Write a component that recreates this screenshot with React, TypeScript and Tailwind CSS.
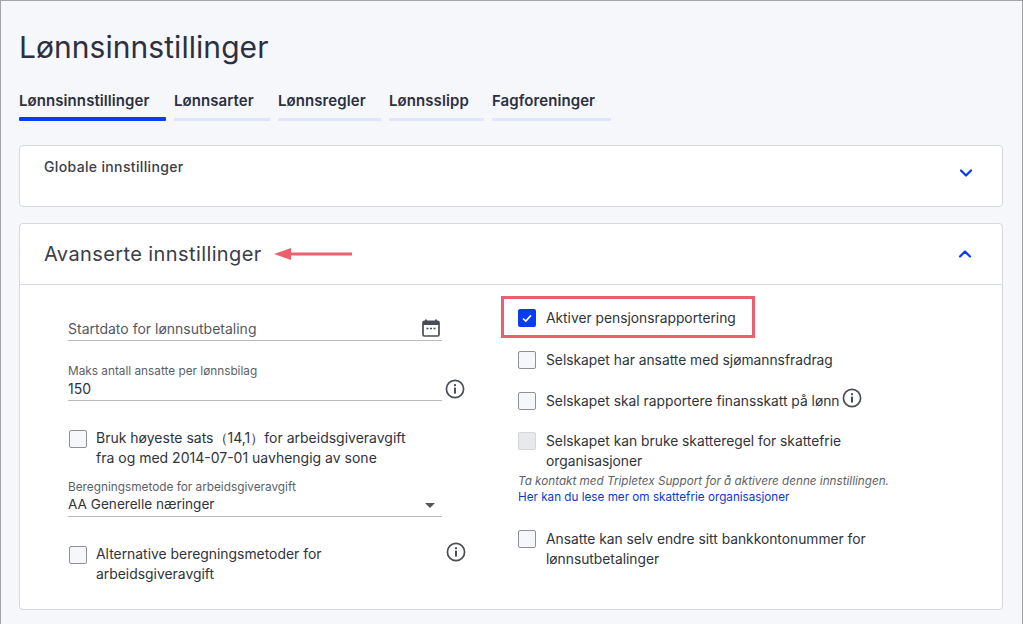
import { ChevronDown, ChevronUp } from 'lucide-react';

const tabs = [
  { label: 'Lønnsinnstillinger', width: 'w-[147px]', active: true },
  { label: 'Lønnsarter', width: 'w-[96px]', active: false },
  { label: 'Lønnsregler', width: 'w-[103px]', active: false },
  { label: 'Lønnsslipp', width: 'w-[95px]', active: false },
  { label: 'Fagforeninger', width: 'w-[119px]', active: false },
];

function InfoIcon({ className }: { className?: string }) {
  return (
    <svg viewBox="0 0 20 20" className={className} fill="none">
      <circle cx="10" cy="10" r="8.6" stroke="#4a4d55" strokeWidth="1.7" />
      <circle cx="10" cy="6.2" r="1.15" fill="#4a4d55" />
      <rect x="9" y="8.6" width="2" height="6" fill="#4a4d55" />
    </svg>
  );
}

function CalendarIcon() {
  return (
    <svg viewBox="0 0 18 18" className="w-[18px] h-[18px]" fill="none">
      <path d="M4 0.5v2.5M14 0.5v2.5" stroke="#4a4d55" strokeWidth="1.8" />
      <rect x="1" y="2.4" width="16" height="14.6" rx="1.4" stroke="#4a4d55" strokeWidth="1.7" />
      <rect x="1" y="2.4" width="16" height="3.6" fill="#4a4d55" />
      <path d="M4.5 9.4h2M8 9.4h2M11.5 9.4h2" stroke="#4a4d55" strokeWidth="1.5" />
    </svg>
  );
}

function Box({ checked, disabled }: { checked?: boolean; disabled?: boolean }) {
  if (checked) {
    return (
      <div className="w-[18px] h-[18px] shrink-0 rounded-[2px] bg-[#0a3cf5] flex items-center justify-center">
        <svg viewBox="0 0 12 12" className="w-[12px] h-[12px]" fill="none">
          <path d="M2 6.5l2.8 2.6L10 3.4" stroke="white" strokeWidth="1.7" />
        </svg>
      </div>
    );
  }
  return (
    <div
      className={
        disabled
          ? 'w-[18px] h-[18px] shrink-0 rounded-[2px] border border-[#d5d6da] bg-[#e8e9ed]'
          : 'w-[18px] h-[18px] shrink-0 rounded-[2px] border border-[#8f9197] bg-[#f6f7fb]'
      }
    />
  );
}

export default function App() {
  return (
    <div className="w-[1023px] h-[624px] overflow-hidden bg-[#f6f7fb] border-t border-x border-[#a3a4a8] px-[18px] text-[#30333b] font-['Inter','Liberation_Sans',sans-serif] text-[14px]">
      <h1 className="mt-[27px] h-[38px] leading-[38px] text-[30px] font-normal text-[#2c3040] tracking-[0.05px]">
        Lønnsinnstillinger
      </h1>

      {/* Tabs */}
      <div className="mt-[24px] flex gap-2">
        {tabs.map((tab) => (
          <div key={tab.label} className={tab.width}>
            <div className="h-[27px] leading-[22px] text-[15px] tracking-[0.08px] font-semibold text-[#2c3040] whitespace-nowrap">
              {tab.label}
            </div>
            <div className={tab.active ? 'h-[4px] rounded-[1px] bg-[#0a3cf5]' : 'mt-[1px] h-[3px] bg-[#dfe6fb]'} />
          </div>
        ))}
      </div>

      {/* Globale innstillinger */}
      <div className="mt-[24px] w-[984px] h-[62px] bg-white border border-[#d8d9dd] rounded-[4px] pl-[24px] pr-[26px] flex justify-between">
        <div className="mt-[12px] text-[14px] tracking-[0.35px] leading-[18px] font-medium text-[#3a3d4a]">Globale innstillinger</div>
        <ChevronDown className="mt-[17px] w-[20px] h-[20px] text-[#0a3cf5]" strokeWidth={2.7} />
      </div>

      {/* Avanserte innstillinger */}
      <div className="mt-[16px] w-[984px] h-[387px] bg-white border border-[#d8d9dd] rounded-[4px]">
        <div className="h-[61px] border-b border-[#d8d9dd] pl-[24px] pr-[27px] flex items-center justify-between">
          <div className="flex items-center gap-[12px]">
            <span className="text-[20px] leading-[24px] text-[#3a3d4a] tracking-[0.4px]">Avanserte innstillinger</span>
            <svg viewBox="0 0 78 12" className="w-[78px] h-[12px]">
              <path d="M0 6L17 0v4.5h61v3H17V12z" fill="#ec5f6c" />
            </svg>
          </div>
          <ChevronUp className="w-[20px] h-[20px] text-[#0a3cf5]" strokeWidth={2.7} />
        </div>

        <div className="flex">
          {/* Left column */}
          <div className="w-[482px] pl-[48px] shrink-0">
            <div className="mt-[25px] w-[374px] h-[31px] border-b border-[#b9babd] flex justify-between pr-[2px] text-[#55585f]">
              <span className="mt-[9px] leading-[20px]">Startdato for lønnsutbetaling</span>
              <span className="mt-[9px]"><CalendarIcon /></span>
            </div>

            <div className="mt-[22px] flex gap-[3px]">
              <div className="w-[374px] h-[38px] border-b border-[#b9babd]">
                <div className="text-[11.8px] leading-[16px] text-[#5c5f66]">Maks antall ansatte per lønnsbilag</div>
                <div className="leading-[20px] text-[#30333b]">150</div>
              </div>
              <InfoIcon className="mt-[16px] w-[20px] h-[20px]" />
            </div>

            <div className="mt-[27px] ml-[1px] flex gap-[9px]">
              <div className="mt-[2px]"><Box /></div>
              <div className="leading-[20px] w-[340px]">
                Bruk høyeste sats（14,1）for arbeidsgiveravgift
                <br />
                fra og med 2014-07-01 uavhengig av sone
              </div>
            </div>

            <div className="mt-[11px] w-[374px] h-[38px] border-b border-[#b9babd] relative">
              <div className="text-[11.8px] leading-[16px] text-[#5c5f66]">Beregningsmetode for arbeidsgiveravgift</div>
              <div className="text-[13.6px] leading-[20px] mt-[-1px]">AA Generelle næringer</div>
              <div className="absolute right-[7px] top-[24px] w-0 h-0 border-x-[5px] border-x-transparent border-t-[5px] border-t-[#55585f]" />
            </div>

            <div className="mt-[27px] flex">
              <div className="ml-[1px] mr-[9px] mt-[2px]"><Box /></div>
              <div className="leading-[20px] w-[340px] text-[13.9px]">
                Alternative beregningsmetoder for
                <br />
                arbeidsgiveravgift
              </div>
              <InfoIcon className="ml-[10px] w-[20px] h-[20px] mt-[-2px]" />
            </div>
          </div>

          {/* Right column */}
          <div className="pl-[16px] w-[500px] text-[13.8px]">
            <div className="mt-[11px] ml-[-17px] w-[254px] h-[42px] border-[3px] border-[#ec5f6c] pl-[14px] pt-[2px] flex items-center gap-[10px]">
              <Box checked />
              <span className="leading-[20px]">Aktiver pensjonsrapportering</span>
            </div>

            <div className="mt-[12px] flex items-center gap-[10px] h-[20px]">
              <Box />
              <span className="leading-[20px]">Selskapet har ansatte med sjømannsfradrag</span>
            </div>

            <div className="mt-[21px] flex items-center gap-[10px] h-[20px]">
              <Box />
              <span className="leading-[20px]">Selskapet skal rapportere finansskatt på lønn</span>
              <InfoIcon className="ml-[-7px] mb-[6px] w-[20px] h-[20px]" />
            </div>

            <div className="mt-[20px] flex gap-[10px]">
              <div className="mt-[1px]"><Box disabled /></div>
              <div className="leading-[20px] w-[350px]">
                Selskapet kan bruke skatteregel for skattefrie organisasjoner
              </div>
            </div>
            <div className="text-[11.7px] leading-[16px] italic text-[#5c5f66] mt-[2px] whitespace-nowrap">
              Ta kontakt med Tripletex Support for å aktivere denne innstillingen.
            </div>
            <div className="text-[11.7px] leading-[16px] text-[#0a3cc8] whitespace-nowrap">
              Her kan du lese mer om skattefrie organisasjoner
            </div>

            <div className="mt-[24px] flex gap-[10px]">
              <div className="mt-[1px]"><Box /></div>
              <div className="leading-[20px] w-[350px]">
                Ansatte kan selv endre sitt bankkontonummer for lønnsutbetalinger
              </div>
            </div>
          </div>
        </div>
      </div>
    </div>
  );
}
